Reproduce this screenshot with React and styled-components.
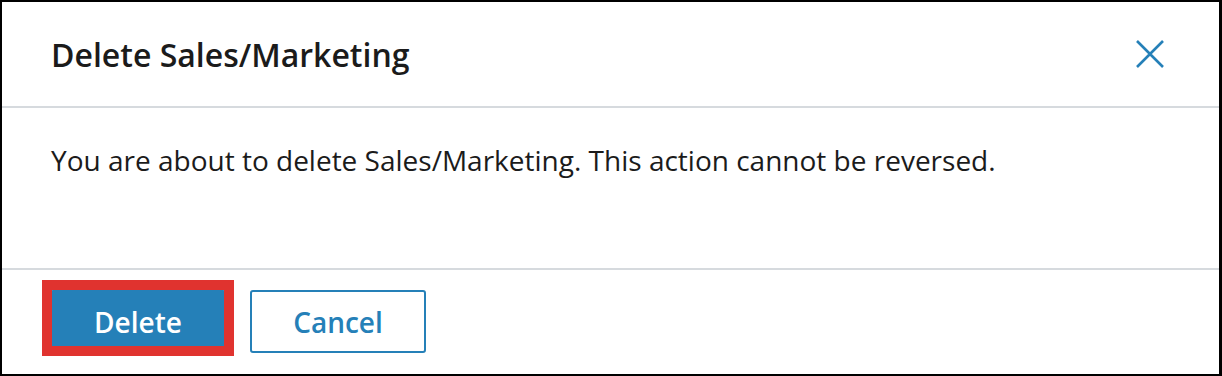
import React from "react";
import styled, { createGlobalStyle } from "styled-components";

const Global = createGlobalStyle`
  html, body { margin: 0; padding: 0; background: #fff; }
  body { font-family: "Open Sans", "Noto Sans", sans-serif; }
  * { box-sizing: border-box; }
`;

const Frame = styled.div`
  width: 1222px;
  height: 376px;
  border-style: solid;
  border-color: #000;
  border-width: 2px 3px 2px 2px;
  display: flex;
  flex-direction: column;
  background: #fff;
`;

const Header = styled.div`
  height: 106px;
  display: flex;
  align-items: center;
  justify-content: space-between;
  padding: 0 49px 0 49px;
  border-bottom: 2px solid #d6dade;
`;

const Title = styled.h2`
  margin: 0;
  font-size: 32px;
  font-weight: 600;
  color: #1b1b1b;
`;

const CloseButton = styled.button`
  width: 40px;
  height: 40px;
  border: none;
  background: none;
  padding: 0;
  display: flex;
  align-items: center;
  justify-content: center;
  cursor: pointer;
`;

const Body = styled.div`
  height: 162px;
  padding: 0 49px;
  display: flex;
  align-items: flex-start;
  border-bottom: 2px solid #d6dade;
`;

const Message = styled.p`
  margin: 33px 0 0;
  font-size: 28px;
  color: #1b1b1b;
`;

const Footer = styled.div`
  flex: 1;
  display: flex;
  gap: 24px;
  padding: 20px 48px 0;
`;

const Button = styled.button`
  position: relative;
  width: 176px;
  height: 63px;
  border-radius: 3px;
  font-family: inherit;
  font-size: 28px;
  font-weight: 600;
  cursor: pointer;
  border: 2px solid #2580b8;
  background: ${(p) => (p.$primary ? "#2580b8" : "#fff")};
  color: ${(p) => (p.$primary ? "#fff" : "#2580b8")};
`;

const Highlight = styled.span`
  position: absolute;
  left: -10px;
  right: -10px;
  top: -12px;
  bottom: -5px;
  border: 10px solid #e0332f;
  pointer-events: none;
`;

export default function App() {
  return (
    <>
      <Global />
      <Frame>
        <Header>
          <Title>Delete Sales/Marketing</Title>
          <CloseButton aria-label="Close">
            <svg width="28" height="28" viewBox="0 0 28 28">
              <path d="M1 1 L27 27 M27 1 L1 27" stroke="#2580b8" strokeWidth="2.6" fill="none" />
            </svg>
          </CloseButton>
        </Header>
        <Body>
          <Message>You are about to delete Sales/Marketing. This action cannot be reversed.</Message>
        </Body>
        <Footer>
          <Button $primary>
            Delete
            <Highlight />
          </Button>
          <Button>Cancel</Button>
        </Footer>
      </Frame>
    </>
  );
}
